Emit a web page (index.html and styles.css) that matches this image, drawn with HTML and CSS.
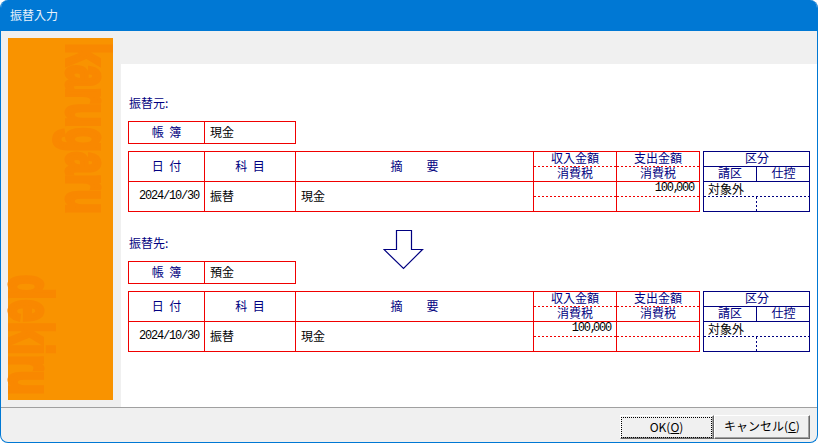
FILE: index.html
```html
<!DOCTYPE html>
<html lang="ja">
<head>
<meta charset="utf-8">
<title>振替入力</title>
<link rel="stylesheet" href="styles.css">
</head>
<body>
<div class="window">
  <header class="titlebar">振替入力</header>
  <div class="content">
    <aside class="side">
      <span class="brand brand-top">karugaru</span>
      <span class="brand brand-bottom">dekiru</span>
    </aside>
    <main class="panel">
      <section class="block">
        <div class="label">振替元:</div>
        <div class="ledger">
          <div class="cell head">帳 簿</div>
          <div class="cell data">現金</div>
        </div>
        <div class="rows">
          <div class="journal">
            <div class="cell head">日 付</div>
            <div class="cell head">科 目</div>
            <div class="cell head">摘　　要</div>
            <div class="cell money"><div class="half head dash">収入金額</div><div class="half head">消費税</div></div>
            <div class="cell money"><div class="half head dash">支出金額</div><div class="half head">消費税</div></div>
            <div class="cell date">2024/10/30</div>
            <div class="cell data">振替</div>
            <div class="cell data">現金</div>
            <div class="cell money"><div class="half amount dash"></div><div class="half"></div></div>
            <div class="cell money"><div class="half amount dash">100<span class="comma">,</span>000</div><div class="half"></div></div>
          </div>
          <div class="kind">
            <div class="k-cell k-wide k-line head">区分</div>
            <div class="k-cell k-line k-div head">請区</div>
            <div class="k-cell k-line head">仕控</div>
            <div class="k-cell k-wide k-dash k-text">対象外</div>
            <div class="k-cell k-dot"></div>
            <div class="k-cell"></div>
          </div>
        </div>
      </section>
      <section class="block">
        <div class="label">振替先:</div>
        <div class="ledger">
          <div class="cell head">帳 簿</div>
          <div class="cell data">預金</div>
        </div>
        <div class="rows">
          <div class="journal">
            <div class="cell head">日 付</div>
            <div class="cell head">科 目</div>
            <div class="cell head">摘　　要</div>
            <div class="cell money"><div class="half head dash">収入金額</div><div class="half head">消費税</div></div>
            <div class="cell money"><div class="half head dash">支出金額</div><div class="half head">消費税</div></div>
            <div class="cell date">2024/10/30</div>
            <div class="cell data">振替</div>
            <div class="cell data">現金</div>
            <div class="cell money"><div class="half amount dash">100<span class="comma">,</span>000</div><div class="half"></div></div>
            <div class="cell money"><div class="half amount dash"></div><div class="half"></div></div>
          </div>
          <div class="kind">
            <div class="k-cell k-wide k-line head">区分</div>
            <div class="k-cell k-line k-div head">請区</div>
            <div class="k-cell k-line head">仕控</div>
            <div class="k-cell k-wide k-dash k-text">対象外</div>
            <div class="k-cell k-dot"></div>
            <div class="k-cell"></div>
          </div>
        </div>
      </section>
      <svg class="arrow" width="41" height="40" viewBox="0 0 41 40" aria-hidden="true">
        <path d="M13.5 .5H28.5V19.5H39.5L20.5 38.5L1 19.5H13.5Z" fill="#fff" stroke="#000080" stroke-width="1.2"/>
      </svg>
    </main>
  </div>
  <footer class="footer">
    <button class="btn btn-ok" type="button"><span class="focus">OK(<u>O</u>)</span></button>
    <button class="btn" type="button"><span class="btn-label">キャンセル(<u>C</u>)</span></button>
  </footer>
</div>
</body>
</html>
```
FILE: styles.css
```css
* { box-sizing: border-box; }
html, body { margin: 0; padding: 0; background: #fff; }
body {
  font-family: "Noto Sans CJK JP", "Liberation Sans", sans-serif;
  font-size: 12px;
  line-height: 14px;
  color: #000;
  overflow: hidden;
}
.window {
  width: 818px;
  height: 443px;
  display: flex;
  flex-direction: column;
  background: #f0f0f0;
  border: 1px solid #0078d4;
  border-top: 0;
  border-radius: 8px;
  overflow: hidden;
}
.titlebar {
  height: 31px;
  flex: none;
  background: #0078d4;
  color: #e8f2fb;
  padding: 8px 0 0 9px;
  line-height: 14px;
}
.content {
  flex: 1;
  display: flex;
  min-height: 0;
}
.side {
  position: relative;
  flex: none;
  width: 105px;
  height: 362px;
  margin: 7px 8px 0 7px;
  background: #f99300;
}
.brand {
  position: absolute;
  writing-mode: vertical-rl;
  font-family: "Liberation Sans", sans-serif;
  font-weight: 700;
  font-size: 61px;
  line-height: 44px;
  color: #f98800;
  -webkit-text-stroke: 4px #f98800;
  transform-origin: top left;
  transform: scaleY(.655);
  white-space: nowrap;
}
.brand-top { left: 58px; top: 5px; }
.brand-bottom { left: 1px; top: 237px; }
.panel {
  position: relative;
  flex: 1;
  margin-top: 33px;
  padding: 32px 0 0 7px;
  background: #fff;
}
.block { margin-bottom: 24px; }
.label {
  height: 16px;
  color: #000080;
  margin-left: 1px;
  margin-bottom: 9px;
}
.ledger {
  display: grid;
  grid-template-columns: 76px 91px;
  width: 168px;
  height: 23px;
  border: solid #f00000;
  border-width: 1px 0 1px 1px;
  margin-bottom: 7px;
}
.ledger .cell { border-bottom: 0; }
.rows { display: flex; gap: 3px; }
.journal {
  display: grid;
  grid-template-columns: 76px 91px 238px 83px 83px;
  grid-template-rows: 30px 30px;
  width: 572px;
  height: 61px;
  border: solid #f00000;
  border-width: 1px 0 0 1px;
}
.cell {
  display: flex;
  align-items: center;
  justify-content: center;
  border: solid #f00000;
  border-width: 0 1px 1px 0;
  min-width: 0;
  padding-bottom: 2px;
}
.head { color: #000080; word-spacing: 3px; }
.data { justify-content: flex-start; padding-left: 5px; }
.date {
  justify-content: flex-start;
  padding-left: 10px;
  font-family: "Liberation Mono", monospace;
  letter-spacing: -1.2px;
}
.money { flex-direction: column; align-items: stretch; padding-bottom: 0; }
.half {
  height: 15px;
  flex: none;
  display: flex;
  align-items: center;
  justify-content: center;
  padding-bottom: 2px;
}
.half.dash {
  padding-bottom: 3px;
  background: repeating-linear-gradient(90deg, #f00000 0 2px, transparent 2px 4px) left bottom / 100% 1px no-repeat;
}
.half:last-child { height: 14px; }
.amount {
  justify-content: flex-end;
  padding-right: 5px;
  font-family: "Liberation Mono", monospace;
  letter-spacing: -1.2px;
}
.comma { letter-spacing: -4px; }
.kind {
  display: grid;
  grid-template-columns: 53px 53px;
  grid-template-rows: 15px 15px 15px 14px;
  width: 107px;
  height: 61px;
  border: 1px solid #000080;
}
.k-cell {
  display: flex;
  align-items: center;
  justify-content: center;
  min-width: 0;
  padding-bottom: 2px;
}
.k-wide { grid-column: 1 / 3; }
.k-line { border-bottom: 1px solid #000080; }
.k-div { border-right: 1px solid #000080; }
.k-dash {
  background: repeating-linear-gradient(90deg, #000080 0 2px, transparent 2px 4px) left bottom / 100% 1px no-repeat;
}
.k-dot {
  background: repeating-linear-gradient(180deg, #000080 0 2px, transparent 2px 4px) right top / 1px 100% no-repeat;
}
.k-text { justify-content: flex-start; padding-left: 4px; }
.arrow {
  position: absolute;
  left: 262px;
  top: 166px;
}
.footer {
  flex: none;
  height: 35px;
  display: flex;
  justify-content: flex-end;
  border-top: 1px solid #a0a0a0;
  padding: 7px 7px 0 0;
}
.btn {
  height: 24px;
  width: 96px;
  padding: 0;
  background: #f0f0f0;
  font: inherit;
  color: #000;
  border: 1px solid;
  border-color: #fff #696969 #696969 #fff;
  box-shadow: inset -1px -1px 0 #a0a0a0;
}
.btn-label { display: block; margin-top: -2px; }
.btn-ok { width: 94px; }
.focus {
  display: flex;
  align-items: center;
  justify-content: center;
  height: calc(100% - 1px);
  width: calc(100% - 1px);
  border: 1px dotted #000;
  padding-bottom: 1px;
}
```
